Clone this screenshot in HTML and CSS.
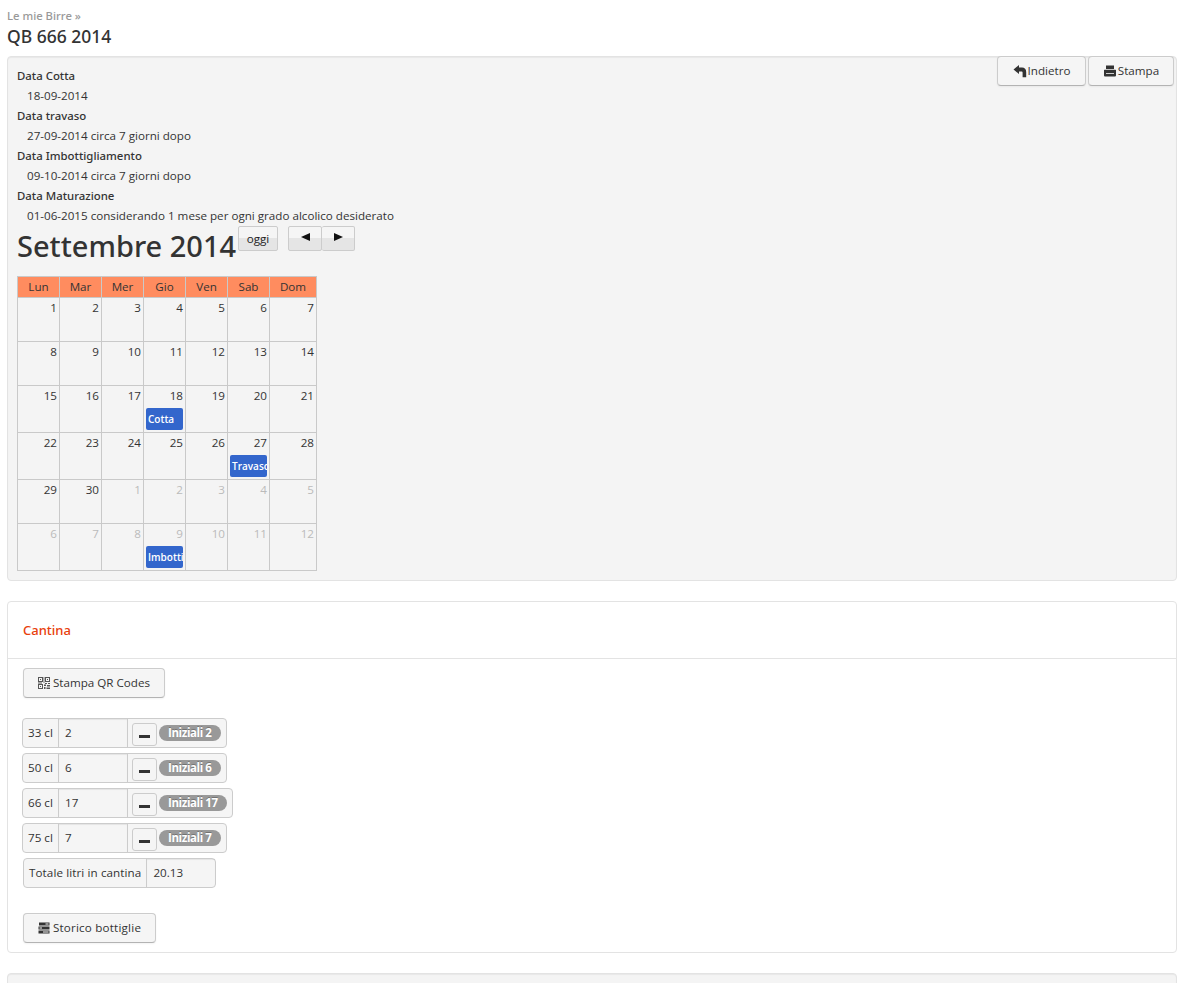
FILE: index.html
```html
<!DOCTYPE html>
<html lang="it">
<head>
<meta charset="utf-8">
<title>QB 666 2014</title>
<link rel="stylesheet" href="styles.css">
</head>
<body>
<div class="crumb">Le mie Birre »</div>
<h1 class="title">QB 666 2014</h1>
<section class="well">
  <div class="actions">
    <a class="btn btn-top"><svg class="ico" viewBox="0 0 14 14"><path d="M0.5 5.5 L6 1 V3.6 H9 C11.6 3.6 13.2 5.4 13.2 8 V13.2 H9.6 V8.6 C9.6 7.9 9.2 7.5 8.5 7.5 H6 V10 Z"/></svg>Indietro</a>
    <a class="btn btn-top"><svg class="ico" viewBox="0 0 14 14"><path d="M3 1.5H11V5H3Z M1.5 5.8H12.5Q13 5.8 13 6.3V11.5Q13 12.5 12 12.5H2Q1 12.5 1 11.5V6.3Q1 5.8 1.5 5.8Z"/><path fill="#f5f5f5" d="M3 9.2H11V10H3Z"/></svg>Stampa</a>
  </div>
  <dl class="dates">
    <dt>Data Cotta</dt><dd>18-09-2014</dd>
    <dt>Data travaso</dt><dd>27-09-2014 circa 7 giorni dopo</dd>
    <dt>Data Imbottigliamento</dt><dd>09-10-2014 circa 7 giorni dopo</dd>
    <dt>Data Maturazione</dt><dd>01-06-2015 considerando 1 mese per ogni grado alcolico desiderato</dd>
  </dl>
  <div class="cal-head">
    <h2 class="cal-title">Settembre 2014</h2>
    <button class="fc-btn fc-today">oggi</button>
    <div class="fc-pair">
      <button class="fc-btn fc-nav"><svg class="arrow" viewBox="0 0 9 8"><path d="M0 4 L9 0 V8 Z"/></svg></button>
      <button class="fc-btn fc-nav"><svg class="arrow" viewBox="0 0 9 8"><path d="M9 4 L0 0 V8 Z"/></svg></button>
    </div>
  </div>
  <table class="cal">
    <thead><tr><th>Lun</th><th>Mar</th><th>Mer</th><th>Gio</th><th>Ven</th><th>Sab</th><th>Dom</th></tr></thead>
    <tbody>
      <tr><td><div class="n">1</div></td><td><div class="n">2</div></td><td><div class="n">3</div></td><td><div class="n">4</div></td><td><div class="n">5</div></td><td><div class="n">6</div></td><td><div class="n">7</div></td></tr>
      <tr><td><div class="n">8</div></td><td><div class="n">9</div></td><td><div class="n">10</div></td><td><div class="n">11</div></td><td><div class="n">12</div></td><td><div class="n">13</div></td><td><div class="n">14</div></td></tr>
      <tr><td><div class="n">15</div></td><td><div class="n">16</div></td><td><div class="n">17</div></td><td><div class="n">18</div><div class="ev">Cotta</div></td><td><div class="n">19</div></td><td><div class="n">20</div></td><td><div class="n">21</div></td></tr>
      <tr><td><div class="n">22</div></td><td><div class="n">23</div></td><td><div class="n">24</div></td><td><div class="n">25</div></td><td><div class="n">26</div></td><td><div class="n">27</div><div class="ev">Travaso</div></td><td><div class="n">28</div></td></tr>
      <tr><td><div class="n">29</div></td><td><div class="n">30</div></td><td class="off"><div class="n">1</div></td><td class="off"><div class="n">2</div></td><td class="off"><div class="n">3</div></td><td class="off"><div class="n">4</div></td><td class="off"><div class="n">5</div></td></tr>
      <tr><td class="off"><div class="n">6</div></td><td class="off"><div class="n">7</div></td><td class="off"><div class="n">8</div></td><td class="off"><div class="n">9</div><div class="ev">Imbottigliamento</div></td><td class="off"><div class="n">10</div></td><td class="off"><div class="n">11</div></td><td class="off"><div class="n">12</div></td></tr>
    </tbody>
  </table>
</section>
<section class="panel">
  <header class="panel-head">Cantina</header>
  <div class="panel-body">
    <a class="btn btn-flow qr"><svg class="ico ico-qr" viewBox="0 0 12 12"><path d="M0 0H5V5H0Z M1 1V4H4V1Z M2 2H3V3H2Z M7 0H12V5H7Z M8 1V4H11V1Z M9 2H10V3H9Z M0 7H5V12H0Z M1 8V11H4V8Z M2 9H3V10H2Z M5.6 0H6.4V6H5.6Z M7 6H9V7H7Z M10 6H12V7H10Z M6 7.5H8V9H6Z M9 8H12V9.5H9Z M6 10H7.5V12H6Z M8.5 10.5H12V12H8.5Z M0 5.6H4V6.4H0Z" fill-rule="evenodd"/></svg>Stampa QR Codes</a>
    <div class="bottles">
      <div class="group"><span class="addon size">33 cl</span><span class="field">2</span><span class="tail"><button class="minus"><i></i></button><span class="badge">Iniziali 2</span></span></div>
      <div class="group"><span class="addon size">50 cl</span><span class="field">6</span><span class="tail"><button class="minus"><i></i></button><span class="badge">Iniziali 6</span></span></div>
      <div class="group"><span class="addon size">66 cl</span><span class="field">17</span><span class="tail"><button class="minus"><i></i></button><span class="badge">Iniziali 17</span></span></div>
      <div class="group"><span class="addon size">75 cl</span><span class="field">7</span><span class="tail"><button class="minus"><i></i></button><span class="badge">Iniziali 7</span></span></div>
      <div class="group total"><span class="addon addon-total">Totale litri in cantina</span><span class="field">20.13</span></div>
    </div>
    <a class="btn btn-flow history"><svg class="ico ico-tasks" viewBox="0 0 12 12"><path d="M1 0.5H11.5V3.5H1Z M0.5 4.5H11.5V7.5H0.5Z M0.5 8.5H11.5V11.5H0.5Z"/><path fill="#f5f5f5" d="M7.5 1.4H10.5V2.6H7.5Z M1.5 5.4H4V6.6H1.5Z M5 9.4H10.5V10.6H5Z"/></svg>Storico bottiglie</a>
  </div>
</section>
<section class="well well-next"></section>
</body>
</html>
```
FILE: styles.css
```css
html, body { margin: 0; padding: 0; }
body {
  height: 983px;
  overflow: hidden;
  padding: 0 14px 0 7px;
  background: #fff;
  color: #333;
  font-family: "Open Sans", "Noto Sans", sans-serif;
  font-size: 11.63px;
  line-height: 20px;
}
.crumb {
  padding-top: 6px;
  color: #999;
  font-family: "Noto Sans", sans-serif;
  font-weight: 500;
  font-size: 11.3px;
}
.title {
  margin: 0 0 9px;
  height: 21px;
  font-family: "Noto Sans", sans-serif;
  font-size: 17.5px;
  line-height: 21px;
  font-weight: 500;
  color: #333;
}
.well {
  padding: 9px;
  background: #f4f4f4;
  border: 1px solid #e3e3e3;
  border-radius: 4px;
  height: 505px;
  box-shadow: inset 0 1px 1px rgba(0,0,0,.05);
}
.well-next { height: 30px; margin-top: 20px; }
.actions { float: right; display: flex; gap: 2px; margin: -10px -7px 0 0; }
.btn {
  display: inline-flex;
  align-items: center;
  justify-content: center;
  height: 30px;
  box-sizing: border-box;
  background: #f5f5f5;
  border: 1px solid #ccc;
  border-bottom-color: #b3b3b3;
  border-radius: 4px;
  box-shadow: inset 0 1px 0 rgba(255,255,255,.2), 0 1px 2px rgba(0,0,0,.05);
  color: #333;
}
.btn-top:nth-child(1) { width: 89px; }
.btn-top:nth-child(2) { width: 86px; }
.btn-flow { display: flex; width: 133px; }
.btn-flow.qr { width: 142px; }
.history { letter-spacing: .2px; }
.ico { width: 14px; height: 14px; fill: #333; margin-right: 1px; flex: none; }
.ico-qr { width: 12px; height: 12px; margin-right: 3px; fill: #555; }
.ico-tasks { width: 12px; height: 12px; margin-right: 3px; }
.dates { margin: 0; }
.dates dt { font-family: "Noto Sans", sans-serif; font-weight: 500; font-size: 11.4px; }
.dates dd { margin: 0 0 0 10px; }
.cal-head { display: flex; align-items: flex-start; height: 50px; }
.cal-title {
  margin: 0;
  width: 220px;
  white-space: nowrap;
  font-family: "Noto Sans", sans-serif;
  font-size: 29px;
  line-height: 40px;
  font-weight: 500;
  color: #333;
}
.fc-btn {
  height: 25px;
  padding: 0;
  margin: 0;
  font: inherit;
  color: #222;
  border: 1px solid #ccc;
  border-radius: 2px;
  background: linear-gradient(#f5f5f5 0 11px, #e5e5e5 11px 100%);
  display: flex;
  align-items: center;
  justify-content: center;
  box-sizing: border-box;
}
.fc-today { width: 40px; margin-left: 1px; }
.fc-pair { display: flex; margin-left: 10px; }
.fc-nav { width: 34px; }
.fc-nav + .fc-nav { width: 33px; border-left: 0; }
.arrow { width: 9px; height: 8px; fill: #111; margin-bottom: 3px; }
.cal {
  border-collapse: collapse;
  table-layout: fixed;
  width: 300px;
  background: #f4f4f4;
}
.cal th, .cal td {
  border: 1px solid #c9c9c9;
  padding: 0;
  width: 41px;
}
.cal th:last-child { width: 46px; }
.cal th {
  height: 20px;
  background: #ff8c5f;
  font-weight: 400;
  text-align: center;
  line-height: 20px;
}
.cal td { height: 43px; vertical-align: top; }
.n { padding-right: 2px; text-align: right; height: 20px; line-height: 19px; }
.off { color: #bbb; }
.ev {
  margin: 2px;
  height: 22px;
  width: 37px;
  box-sizing: border-box;
  padding-left: 2px;
  overflow: hidden;
  white-space: nowrap;
  background: #3366cc;
  border-radius: 2px;
  color: #fff;
  font-size: 10px;
  font-weight: 600;
  line-height: 22px;
}
.panel {
  margin-top: 20px;
  height: 350px;
  border: 1px solid #e3e3e3;
  border-radius: 4px;
  background: #fff;
}
.panel-head {
  height: 56px;
  padding-left: 15px;
  line-height: 56px;
  border-bottom: 1px solid #e3e3e3;
  color: #e8400c;
  font-family: "Noto Sans", sans-serif;
  font-size: 13px;
  font-weight: 500;
}
.panel-body { padding: 9px 15px 0; }
.bottles { margin: 20px 0 25px -1px; display: flex; flex-direction: column; gap: 5px; align-items: flex-start; }
.group {
  display: flex;
  height: 30px;
  box-sizing: border-box;
  border: 1px solid #ccc;
  border-radius: 4px;
  background: #f5f5f5;
}
.total { margin-left: 1px; }
.addon { padding: 0 5px; line-height: 28px; white-space: nowrap; }
.addon-total { letter-spacing: .1px; }
.size { width: 25px; }
.field {
  width: 57px;
  padding-left: 6px;
  padding-right: 5px;
  line-height: 28px;
  border-left: 1px solid #ccc;
  box-shadow: inset 0 1px 1px rgba(0,0,0,.07);
}
.tail { display: flex; align-items: flex-start; border-left: 1px solid #ccc; padding: 0 5px 0 4px; }
.minus {
  width: 25px;
  height: 23px;
  margin: 4px 2px 0 0;
  padding: 0;
  background: #f5f5f5;
  border: 1px solid #ccc;
  border-radius: 3px;
  box-sizing: border-box;
  display: flex;
  justify-content: center;
  align-items: flex-end;
}
.minus i { display: block; width: 11px; height: 3px; background: #333; margin-bottom: 7px; }
.badge {
  margin-top: 6px;
  height: 16px;
  padding: 0 9px;
  border-radius: 8px;
  background: #999;
  color: #fff;
  font-size: 11.5px;
  letter-spacing: -.4px;
  font-weight: 700;
  line-height: 16px;
  white-space: nowrap;
  text-shadow: 0 -1px 0 rgba(0,0,0,.25);
}
```
